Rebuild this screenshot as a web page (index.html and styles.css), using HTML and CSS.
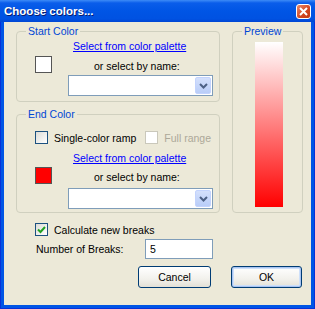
FILE: index.html
```html
<!DOCTYPE html>
<html lang="en">
<head>
  <meta charset="UTF-8" />
  <title>Choose colors...</title>
  <link rel="stylesheet" href="styles.css">
</head>
<body>
  <div class="window">
    <div class="titlebar">
      <span class="title">Choose colors...</span>
      <span class="close">
        <svg width="9" height="9" viewBox="0 0 9 9"><path d="M1 1 L8 8 M8 1 L1 8" stroke="#fff" stroke-width="2" fill="none"/></svg>
      </span>
    </div>

    <div class="client">
      <div class="top">
        <div class="groups">
          <fieldset class="group start">
            <legend>Start Color</legend>
            <div class="color-row">
              <div class="swatch"></div>
              <div class="picker">
                <a class="link" href="#">Select from color palette</a>
                <div class="byname">or select by name:</div>
                <div class="combo">
                  <span class="combo-btn">
                    <svg width="9" height="6" viewBox="0 0 9 6"><path d="M1 1 L4.5 4.5 L8 1" stroke="#4D6185" stroke-width="2" fill="none"/></svg>
                  </span>
                </div>
              </div>
            </div>
          </fieldset>

          <fieldset class="group end">
            <legend>End Color</legend>
            <div class="checks">
              <span class="check"></span>
              <span class="check-label">Single-color ramp</span>
              <span class="check disabled"></span>
              <span class="check-label muted">Full range</span>
            </div>
            <div class="color-row">
              <div class="swatch red"></div>
              <div class="picker">
                <a class="link" href="#">Select from color palette</a>
                <div class="byname">or select by name:</div>
                <div class="combo">
                  <span class="combo-btn">
                    <svg width="9" height="6" viewBox="0 0 9 6"><path d="M1 1 L4.5 4.5 L8 1" stroke="#4D6185" stroke-width="2" fill="none"/></svg>
                  </span>
                </div>
              </div>
            </div>
          </fieldset>
        </div>

        <fieldset class="group preview">
          <legend>Preview</legend>
          <div class="ramp"></div>
        </fieldset>
      </div>

      <div class="calc">
        <span class="check">
          <svg width="11" height="11" viewBox="0 0 11 11"><path d="M2 5.5 L4.5 8 L9 3" stroke="#21A121" stroke-width="2" fill="none"/></svg>
        </span>
        <span class="check-label">Calculate new breaks</span>
      </div>

      <div class="breaks">
        <span class="breaks-label">Number of Breaks:</span>
        <div class="textbox">5</div>
      </div>

      <div class="buttons">
        <button class="btn cancel">Cancel</button>
        <button class="btn ok">OK</button>
      </div>
    </div>
  </div>
</body>
</html>
```

FILE: styles.css
```css
body {
  margin: 0;
  background: #fff;
}

.window {
  width: 315px;
  height: 309px;
  box-sizing: border-box;
  display: flex;
  flex-direction: column;
  background: #0055E5;
  border: 1px solid #0831D9;
  border-top: none;
  font-family: "Liberation Sans", Arial, sans-serif;
}

.titlebar {
  height: 22px;
  margin: 0 -1px;
  display: flex;
  align-items: center;
  justify-content: space-between;
  padding: 0 4px 0 4px;
  background: linear-gradient(#3D8BF7 0, #0A5DEA 3px, #0055E5 50%, #0052E2 85%, #0046D4 100%);
}

.title {
  color: #fff;
  font-weight: bold;
  font-size: 11.5px;
  text-shadow: 1px 1px 0 #0A1C6E;
}

.close {
  width: 15px;
  height: 15px;
  box-sizing: border-box;
  display: flex;
  align-items: center;
  justify-content: center;
  border: 1px solid #fff;
  border-radius: 3px;
  background: linear-gradient(135deg, #E9896A, #D1451F 60%, #C13A15);
}

.client {
  flex: 1;
  margin: 0 3px 3px;
  padding: 3px 8px 0 12px;
  background: #ECE9D8;
  font-size: 10.5px;
  line-height: 12px;
  color: #000;
  display: flex;
  flex-direction: column;
}

.top {
  display: flex;
  gap: 12px;
}

.groups {
  width: 204px;
  display: flex;
  flex-direction: column;
  gap: 6px;
}

.group {
  margin: 0;
  padding: 0;
  min-width: 0;
  border: 1px solid #D0D0BF;
  border-radius: 4px;
}

.group legend {
  padding: 0 2px;
  margin-left: 9px;
  color: #0046D5;
}

.color-row {
  display: flex;
  align-items: flex-start;
}

.swatch {
  width: 17px;
  height: 17px;
  box-sizing: border-box;
  border: 1px solid #555;
  background: #fff;
  margin: 19px 16px 0 18px;
}

.swatch.red {
  background: #FF0000;
  margin-top: 23px;
}

.picker {
  width: 145px;
  padding: 3px 0 5px;
  display: flex;
  flex-direction: column;
}

.end .picker {
  padding: 8px 0 3px;
}

.link {
  margin-left: 5px;
  color: #0000FF;
  text-decoration: underline;
}

.byname {
  margin: 8px 0 0 26px;
}

.end .byname {
  margin-top: 7px;
}

.combo {
  margin-top: 3px;
  height: 21px;
  box-sizing: border-box;
  border: 1px solid #7F9DB9;
  background: #fff;
  display: flex;
  justify-content: flex-end;
  padding: 1px;
}

.end .combo {
  margin-top: 5px;
}

.combo-btn {
  width: 16px;
  display: flex;
  align-items: center;
  justify-content: center;
  border-radius: 2px;
  background: linear-gradient(#D4E0FC, #B9CDF8);
  border: 1px solid #C3D3FD;
  box-sizing: border-box;
}

.checks {
  display: flex;
  align-items: center;
  height: 13px;
  margin: 11px 0 0 18px;
}

.check {
  width: 13px;
  height: 13px;
  box-sizing: border-box;
  border: 1px solid #1C5180;
  background: linear-gradient(135deg, #DCDCD7, #FFFFFF);
  display: flex;
  align-items: center;
  justify-content: center;
  flex: none;
}

.check.disabled {
  border-color: #CAC8BB;
  background: #fff;
  margin-left: 9px;
}

.check-label {
  margin-left: 6px;
}

.muted {
  color: #ACA899;
}

.preview {
  width: 71px;
  box-sizing: border-box;
}

.ramp {
  width: 28px;
  height: 165px;
  margin: 5px 0 5px 22px;
  background: linear-gradient(#FFFFFF, #FF0000);
}

.calc {
  display: flex;
  align-items: center;
  margin-top: 10px;
  padding-left: 19px;
}

.breaks {
  display: flex;
  align-items: center;
  margin-top: 3px;
  padding-left: 20px;
}

.breaks-label {
  width: 109px;
}

.textbox {
  width: 68px;
  height: 20px;
  box-sizing: border-box;
  border: 1px solid #7F9DB9;
  background: #fff;
  padding: 3px 4px;
}

.buttons {
  display: flex;
  justify-content: flex-end;
  gap: 20px;
  margin-top: 7px;
  padding-right: 1px;
}

.btn {
  height: 22px;
  box-sizing: border-box;
  border: 1px solid #003C74;
  border-radius: 3px;
  background: linear-gradient(#FFFFFF, #F2F1EC 60%, #E3E0D6);
  font-family: "Liberation Sans", Arial, sans-serif;
  font-size: 10.5px;
  color: #000;
  padding: 0;
}

.cancel {
  width: 73px;
}

.ok {
  width: 71px;
  box-shadow: inset 0 0 0 1px #A9C4F1, inset 0 0 0 2px #CEE0FA;
}
```
